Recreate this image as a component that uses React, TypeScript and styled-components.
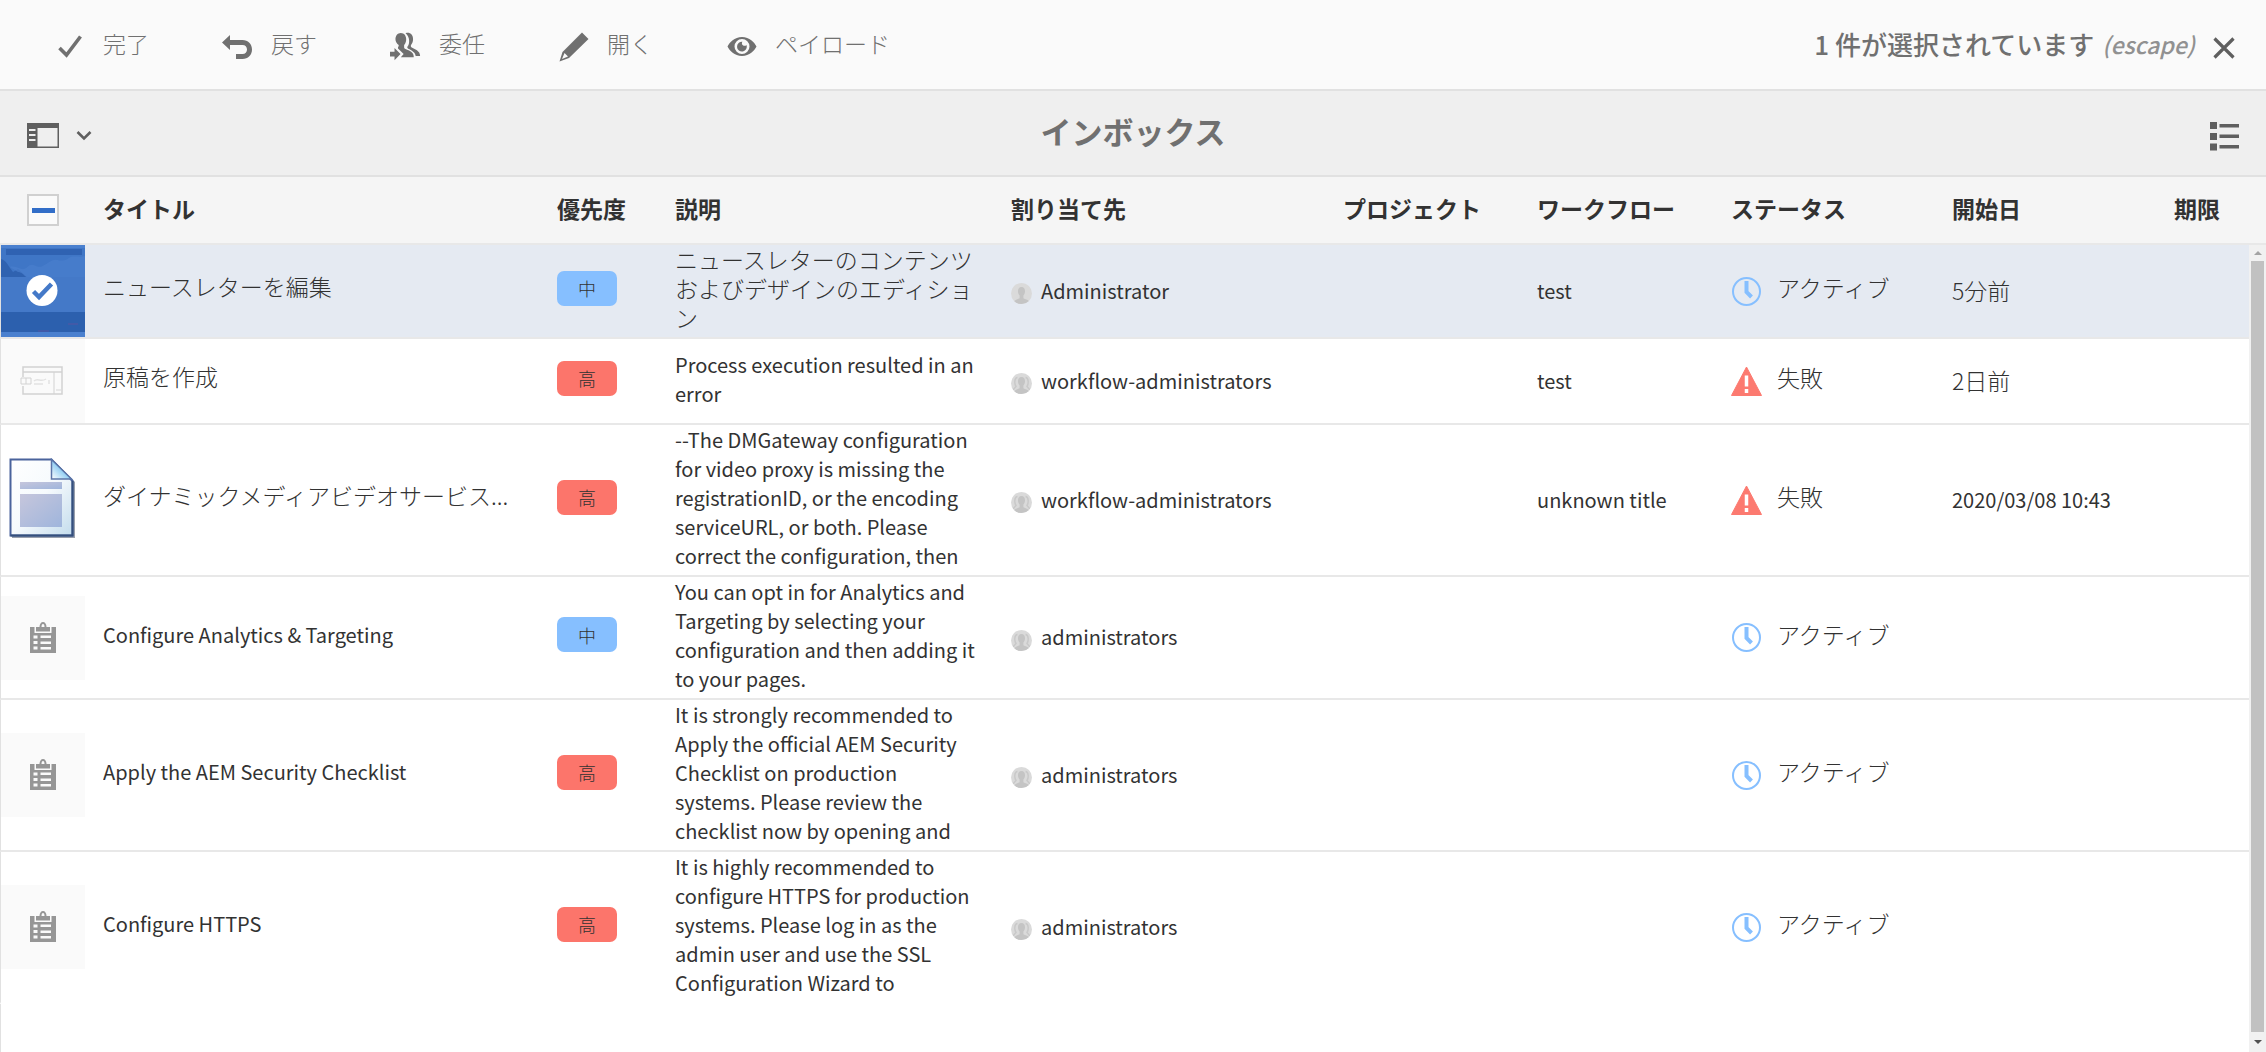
import React from "react";
import styled, { createGlobalStyle, css } from "styled-components";

const GlobalStyle = createGlobalStyle`
  *, *::before, *::after { box-sizing: border-box; }
  body {
    margin: 0;
    background: #fff;
    color: #323232;
    font-family: "Noto Sans CJK JP", "Noto Sans", sans-serif;
    font-size: 23px;
    font-weight: 300;
    line-height: 29px;
  }
  button { border: 0; padding: 0; background: none; color: inherit; font: inherit; cursor: pointer; }
  svg { display: block; flex: none; }
`;

const latinText = css`
  font-size: 20px;
  font-weight: 400;
`;

const Page = styled.div`
  display: flex;
  flex-direction: column;
  min-height: 100vh;
`;

const ActionBar = styled.header`
  display: flex;
  align-items: center;
  justify-content: space-between;
  height: 91px;
  padding: 0 29px 0 54px;
  background: #fafafa;
  border-bottom: 2px solid #e1e1e1;
  color: #707070;
`;

const Actions = styled.div`
  display: flex;
  gap: 73px;
`;

const Action = styled.button`
  display: flex;
  align-items: center;
  gap: 17px;
  padding-top: 4px;
`;

const ActionLabel = styled.span`
  padding-bottom: 6px;
`;

const Selection = styled.div`
  display: flex;
  align-items: center;
  gap: 8px;
  font-size: 26px;
  font-weight: 500;
`;

const Count = styled.span`
  padding-bottom: 2px;
`;

const Escape = styled.em`
  padding-right: 8px;
  color: #919191;
  font-size: 23px;
`;

const IconButton = styled.button`
  display: flex;
  align-items: center;
  gap: 16px;
  padding-top: 6px;
  color: #5f5f5f;
`;

const TitleBar = styled.div`
  display: grid;
  grid-template-columns: 1fr auto 1fr;
  align-items: center;
  height: 86px;
  padding: 0 26px;
  background: #efefef;
  border-bottom: 2px solid #e1e1e1;
`;

const PageTitle = styled.h1`
  margin: 0;
  padding-bottom: 4px;
  color: #707070;
  font-size: 31px;
  font-weight: 700;
  line-height: 40px;
`;

const End = styled.div`
  display: flex;
  justify-content: flex-end;
`;

const ListArea = styled.main`
  display: flex;
  flex: 1;
`;

const TableWrap = styled.div`
  display: flex;
  flex: 1;
  flex-direction: column;
  min-width: 0;
`;

const Filler = styled.div`
  flex: 1;
  border-left: 1px solid #e1e1e1;
`;

const Table = styled.table`
  width: 100%;
  table-layout: fixed;
  border-collapse: separate;
  border-spacing: 0;
`;

const Col = styled.col<{ $w?: number }>`
  ${(p) => p.$w && css`width: ${p.$w}px;`}
`;

const Th = styled.th`
  height: 68px;
  padding: 0 18px 4px;
  background: #f5f5f5;
  border-bottom: 2px solid #e8e8e8;
  font-weight: 700;
  text-align: left;
  white-space: nowrap;
`;

const ThCheck = styled(Th)`
  padding: 0 0 0 27px;
`;

const SelectAll = styled.input`
  appearance: none;
  display: block;
  width: 32px;
  height: 32px;
  margin: 0;
  border: 2px solid #d0d0d0;
  background: linear-gradient(#326ec8, #326ec8) center / 23px 5px no-repeat #fafafa;
`;

const Row = styled.tr<{ $selected?: boolean }>`
  background: ${(p) => (p.$selected ? "#e5eaf2" : "#fff")};
`;

const Td = styled.td<{ $raised?: boolean }>`
  padding: ${(p) => (p.$raised ? "0 18px 6px" : "0 18px")};
  border-bottom: 2px solid #e8e8e8;
  vertical-align: middle;
  ${Row}:last-child & { border-bottom-color: transparent; }
`;

const ThumbCell = styled(Td)`
  padding: 0;
  border-left: 1px solid #e1e1e1;
`;

const DescCell = styled(Td)`
  padding: 0 18px 5px;
`;

const Description = styled.div<{ $latin: boolean }>`
  ${(p) => p.$latin && latinText}
`;

const ItemTitle = styled.div<{ $latin: boolean }>`
  overflow: hidden;
  padding-bottom: 4px;
  line-height: 36px;
  text-overflow: ellipsis;
  white-space: nowrap;
  ${(p) => p.$latin && css`${latinText} padding-bottom: 0;`}
`;

const Value = styled.div<{ $latin: boolean }>`
  padding-bottom: 2px;
  white-space: nowrap;
  ${(p) => p.$latin && latinText}
`;

const Thumb = styled.div<{ $tinted?: boolean }>`
  display: flex;
  align-items: center;
  justify-content: center;
  height: 84px;
  background: ${(p) => (p.$tinted ? "#fafafa" : "transparent")};
`;

const Badge = styled.span<{ $high?: boolean }>`
  display: flex;
  align-items: center;
  justify-content: center;
  width: 60px;
  height: 35px;
  border-radius: 7px;
  background: ${(p) => (p.$high ? "#fc756b" : "#86bfff")};
  font-size: 18px;
  line-height: 24px;
`;

const Person = styled.div`
  display: flex;
  align-items: center;
  gap: 9px;
`;

const Avatar = styled.span`
  padding-top: 5px;
`;

const Status = styled.div`
  display: flex;
  align-items: center;
  gap: 15px;
`;

const StatusLabel = styled.span`
  padding-bottom: 7px;
`;

const RailColumn = styled.div`
  display: flex;
  flex-direction: column;
  width: 17px;
`;

const RailHead = styled.div`
  height: 68px;
  background: #f5f5f5;
  border-bottom: 2px solid #e8e8e8;
`;

const Rail = styled.div`
  display: flex;
  flex: 1;
  flex-direction: column;
  align-items: center;
  background: #f1f1f1;
`;

const RailArrow = styled.div<{ $down?: boolean }>`
  display: flex;
  align-items: center;
  height: ${(p) => (p.$down ? 20 : 16)}px;
  color: ${(p) => (p.$down ? "#505050" : "#a3a3a3")};
`;

const RailThumb = styled.div`
  flex: 1;
  width: 13px;
  background: #c1c1c1;
`;

const CheckIcon = () => (
  <svg width="32" height="32" viewBox="0 0 32 32" fill="none" stroke="currentColor" strokeWidth="3.600">
    <path d="M5.500 17 12.500 24 26.500 5.500" />
  </svg>
);

const RevertIcon = () => (
  <svg width="32" height="32" viewBox="0 0 32 32" fill="currentColor">
    <path d="M0 11.500 8 4v5h12.500C26 9 30 13 30 18.500S26 28 20.500 28H14v-5h6.500c2.800 0 4.500-1.900 4.500-4.500S23.300 14 20.500 14H8v5z" />
  </svg>
);

const DelegateIcon = () => (
  <svg width="32" height="32" viewBox="1 1 34 32" fill="currentColor">
    <path d="M12.500 2c3.600 0 5.700 3 5.700 6.800 0 2.600-.9 4.700-2.200 6.200v2.200c0 1 .5 1.500 1.500 2 4.500 1.900 8.700 3.600 8.700 7.800v1H12.500l3-3.500-6-6v-1.300c.6-.6.8-1.200.8-2.200-2-1.500-3.500-3.600-3.500-6.200C6.800 5 9 2 12.500 2z" />
    <path d="M17.500 2.300c4.700-1.500 8 1.700 8 6.500 0 2.300-.7 4.300-2 5.700-.5.600-.5 2.200.2 2.700 3.500 2.200 9.300 3.500 9.300 9.300h-4.700c-.5-3.800-4.200-6-8-7.700-1.200-.6-1.200-1.600-.5-2.500 2.300-2.900 2.500-10-2.300-14z" />
    <path d="M0 22h5.800v-4l6.400 6.500-6.400 6.500v-4H0z" />
  </svg>
);

const PencilIcon = () => (
  <svg width="32" height="32" viewBox="0 0 32 32" fill="currentColor">
    <path fillRule="evenodd" d="M24 1.500 30.500 8 11 27 1.500 30.500 4.500 21zM6.500 22 4 28 10 25.500z" />
  </svg>
);

const EyeIcon = () => (
  <svg width="32" height="32" viewBox="0 0 32 32" fill="currentColor">
    <path fillRule="evenodd" d="M16 6c7.500 0 12.500 5.500 14.500 9.500-2 4-7 9.500-14.500 9.500S3.500 19.500 1.500 15.500C3.500 11.500 8.500 6 16 6zM16 8a7.500 7.500 0 1 0 0 15 7.500 7.500 0 0 0 0-15z" />
    <path d="M16.500 10.800c-1.300 1.500-.3 4 2 4 .8 0 1.500-.3 2-.9A4.900 4.900 0 1 1 16.500 10.800z" />
  </svg>
);

const CloseIcon = () => (
  <svg width="26" height="26" viewBox="0 0 26 26" fill="none" stroke="currentColor" strokeWidth="3.200">
    <path d="M3.500 3.500 22.500 22.500M22.500 3.500 3.500 22.500" />
  </svg>
);

const PanelIcon = () => (
  <svg width="34" height="26" viewBox="0 0 34 26">
    <path fill="#5f5f5f" fillRule="evenodd" d="M1 0h32v25H1zM11.500 5v18.500H31.500V5z" />
    <path stroke="#efefef" strokeWidth="2" d="M3 7h6.500M3 12h6.500M3 17h6.500" />
  </svg>
);

const ChevronIcon = () => (
  <svg width="16" height="12" viewBox="0 0 16 12" fill="none" stroke="currentColor" strokeWidth="2.600">
    <path d="M1.500 2 8 8.500 14.500 2" />
  </svg>
);

const ListIcon = () => (
  <svg width="30" height="30" viewBox="0 0 30 30" fill="currentColor">
    <path d="M0 1h7v7H0zM0 12h7v7H0zM0 22.500h7v7H0zM9.500 3H29v3.500H9.500zM9.500 13.500H29V17H9.500zM9.500 24H29v3.500H9.500z" />
  </svg>
);

const NewsletterThumb = () => (
  <svg width="84" height="92" viewBox="0 0 84 92">
    <rect width="84" height="92" fill="#4a80cf" />
    <rect y="3" width="84" height="30" fill="#3f76c6" />
    <rect x="5" y="4" width="76" height="6" fill="#2f62b2" />
    <path d="M0 14c4 1 6 4 9 9l3 4 5-3 9 8h-26z" fill="#2f62b0" />
    <path d="M9 22c6-2 10 3 14 2s5-5 9-4 6 3 10 1 9-7 14-6 8 1 12-2 10 0 16-2v22H26c-4-4-6-6-9-6z" fill="#4a7fcd" opacity="0.700" />
    <rect y="32" width="84" height="35" fill="#4479c8" />
    <rect y="67" width="84" height="20" fill="#2c60ae" />
    <path d="M67 79h10M37 86h11" stroke="#4a58a6" strokeWidth="2" opacity="0.700" />
    <circle cx="41" cy="45.500" r="15.500" fill="#fff" />
    <path d="M32.500 46.500 38 52 50.500 39" fill="none" stroke="#4479c8" strokeWidth="4.500" />
  </svg>
);

const DraftThumb = () => (
  <svg width="84" height="84" viewBox="0 0 84 84" fill="none" stroke="#d2d2d2" strokeWidth="1.500">
    <path d="M22 38V28h39v27H22V47M22 33h39" />
    <path d="M20 39h10v6H20zM25 39v6M53 33v22" strokeWidth="1" />
    <path d="M33 42c4-4 6 2 12-2M33 45h9M48 41v4M55 51h5" stroke="#e2e2e2" />
  </svg>
);

const DocumentThumb = () => (
  <svg width="70" height="84" viewBox="1 1 70 84">
    <defs>
      <linearGradient id="sheet" x1="0" y1="0" x2="1" y2="1">
        <stop offset="0" stopColor="#fff" />
        <stop offset="0.5" stopColor="#f6fafd" />
        <stop offset="1" stopColor="#c3dcec" />
      </linearGradient>
      <linearGradient id="block" x1="0" y1="0" x2="1" y2="1">
        <stop offset="0" stopColor="#c6c6dc" />
        <stop offset="1" stopColor="#9fb5dc" />
      </linearGradient>
      <linearGradient id="fold" x1="0" y1="1" x2="1" y2="0">
        <stop offset="0" stopColor="#fff" />
        <stop offset="0.500" stopColor="#8fcdf2" />
        <stop offset="1" stopColor="#d9effb" />
      </linearGradient>
    </defs>
    <path d="M5 5h43l20 20v56H5z" fill="#6d7889" opacity="0.700" />
    <path d="M3.500 2.500h41L65.500 24v54.500h-62z" fill="url(#sheet)" stroke="#4a639c" strokeWidth="2" />
    <path d="M65.500 24v54.500h-62" fill="none" stroke="#35507c" strokeWidth="2" />
    <path d="M44.500 2.500V22h20z" fill="url(#fold)" stroke="#5b75a8" strokeWidth="1.500" />
    <rect x="13" y="25" width="42" height="7" fill="url(#block)" />
    <rect x="13" y="37" width="42" height="33" fill="url(#block)" />
  </svg>
);

const ClipboardIcon = () => (
  <svg width="26" height="32" viewBox="0 0 26 32" fill="#969696">
    <path fillRule="evenodd" d="M0 5h4.500v6h17V5H26v26H0zM3.500 13.500v3h4v-3zM10.500 13.500v2.500H21v-2.500zM3.500 19v3h4v-3zM10.500 19.500V22H21v-2.500zM3.500 24.500v3h4v-3zM10.500 25v2.500H21V25z" />
    <path fillRule="evenodd" d="M6 9.500V5h3.500C9.500 2 11 0 13 0s3.500 2 3.500 5H20v4.500zM11.500 5h3c0-2-.5-3-1.500-3s-1.500 1-1.500 3z" />
  </svg>
);

const UserIcon = ({ group }: { group?: boolean }) => (
  <svg width="21" height="21" viewBox="0 0 21 21">
    <clipPath id="avatar"><circle cx="10.500" cy="10.500" r="10.500" /></clipPath>
    <g clipPath="url(#avatar)">
      <rect width="21" height="21" fill="#dadada" />
      {group && <path d="M6.500 4.500c-3 0-3.500 6-1.500 9L2 17M14.500 4.500c3 0 3.500 6 1.500 9l3 3.500" fill="none" stroke="#c9c9c9" strokeWidth="1.500" />}
      <path d="M10.500 4c2.300 0 3.500 1.800 3.500 4.300 0 2-.8 3.400-1.600 4.300v2.600c1.800 1 4.600 1.200 5.600 3.300V21H3v-2.500c1-2.100 3.800-2.300 5.600-3.300v-2.600C7.800 11.700 7 10.300 7 8.300 7 5.800 8.200 4 10.500 4z" fill="#c4c4c4" />
    </g>
  </svg>
);

const ClockIcon = () => (
  <svg width="31" height="31" viewBox="0 0 31 31" fill="none" stroke="#86bfff">
    <circle cx="15.500" cy="15.500" r="13.500" strokeWidth="2" />
    <path d="M15.500 5v11l5 5" strokeWidth="4" />
  </svg>
);

const AlertIcon = () => (
  <svg width="31" height="31" viewBox="0 0 31 31">
    <path d="M15.500 1 30.500 29.500H.5z" fill="#fc7a70" stroke="#fc7a70" strokeLinejoin="round" />
    <path d="M15.500 9.500v11M15.500 23v4" stroke="#fff" strokeWidth="3.500" />
  </svg>
);

const ArrowIcon = ({ down }: { down?: boolean }) => (
  <svg width="8" height="4" viewBox="0 0 8 4" fill="currentColor">
    <path d={down ? "M0 0h8L4 4z" : "M0 4h8L4 0z"} />
  </svg>
);

type Item = {
  thumb: React.ReactNode;
  tinted?: boolean;
  title: string;
  high?: boolean;
  description: string;
  assignee: string;
  group?: boolean;
  workflow?: string;
  failed?: boolean;
  start?: string;
  selected?: boolean;
};

const items: Item[] = [
  { thumb: <NewsletterThumb />, title: "ニュースレターを編集", description: "ニュースレターのコンテンツおよびデザインのエディション", assignee: "Administrator", workflow: "test", start: "5分前", selected: true },
  { thumb: <DraftThumb />, tinted: true, title: "原稿を作成", high: true, description: "Process execution resulted in an error", assignee: "workflow-administrators", group: true, workflow: "test", failed: true, start: "2日前" },
  { thumb: <DocumentThumb />, title: "ダイナミックメディアビデオサービス...", high: true, description: "--The DMGateway configuration for video proxy is missing the registrationID, or the encoding serviceURL, or both. Please correct the configuration, then", assignee: "workflow-administrators", group: true, workflow: "unknown title", failed: true, start: "2020/03/08 10:43" },
  { thumb: <ClipboardIcon />, tinted: true, title: "Configure Analytics & Targeting", description: "You can opt in for Analytics and Targeting by selecting your configuration and then adding it to your pages.", assignee: "administrators", group: true },
  { thumb: <ClipboardIcon />, tinted: true, title: "Apply the AEM Security Checklist", high: true, description: "It is strongly recommended to Apply the official AEM Security Checklist on production systems. Please review the checklist now by opening and", assignee: "administrators", group: true },
  { thumb: <ClipboardIcon />, tinted: true, title: "Configure HTTPS", high: true, description: "It is highly recommended to configure HTTPS for production systems. Please log in as the admin user and use the SSL Configuration Wizard to", assignee: "administrators", group: true },
];

const actions = [
  { label: "完了", icon: <CheckIcon /> },
  { label: "戻す", icon: <RevertIcon /> },
  { label: "委任", icon: <DelegateIcon /> },
  { label: "開く", icon: <PencilIcon /> },
  { label: "ペイロード", icon: <EyeIcon /> },
];

const columns = ["タイトル", "優先度", "説明", "割り当て先", "プロジェクト", "ワークフロー", "ステータス", "開始日", "期限"];
const widths = [85, undefined, 118, 336, 332, 194, 194, 221, 222, 93];

const isLatin = (text = "") => /^[\x20-\x7e]*$/.test(text);

export default function App() {
  return (
    <Page>
      <GlobalStyle />
      <ActionBar>
        <Actions>
          {actions.map((a) => (
            <Action key={a.label} type="button">
              {a.icon}
              <ActionLabel>{a.label}</ActionLabel>
            </Action>
          ))}
        </Actions>
        <Selection>
          <Count>1 件が選択されています</Count>
          <Escape>(escape)</Escape>
          <IconButton type="button" aria-label="閉じる"><CloseIcon /></IconButton>
        </Selection>
      </ActionBar>
      <TitleBar>
        <IconButton type="button" aria-label="パネル"><PanelIcon /><ChevronIcon /></IconButton>
        <PageTitle>インボックス</PageTitle>
        <End>
          <IconButton type="button" aria-label="リスト表示"><ListIcon /></IconButton>
        </End>
      </TitleBar>
      <ListArea>
        <TableWrap>
          <Table>
            <colgroup>{widths.map((w, i) => <Col key={i} $w={w} />)}</colgroup>
            <thead>
              <tr>
                <ThCheck><SelectAll type="checkbox" aria-label="すべて選択" /></ThCheck>
                {columns.map((c) => <Th key={c} scope="col">{c}</Th>)}
              </tr>
            </thead>
            <tbody>
              {items.map((it) => (
                <Row key={it.title} $selected={it.selected}>
                  <ThumbCell>{it.selected ? it.thumb : <Thumb $tinted={it.tinted}>{it.thumb}</Thumb>}</ThumbCell>
                  <Td $raised><ItemTitle $latin={isLatin(it.title)}>{it.title}</ItemTitle></Td>
                  <Td $raised><Badge $high={it.high}>{it.high ? "高" : "中"}</Badge></Td>
                  <DescCell><Description $latin={isLatin(it.description)}>{it.description}</Description></DescCell>
                  <Td>
                    <Person>
                      <Avatar><UserIcon group={it.group} /></Avatar>
                      <Value $latin>{it.assignee}</Value>
                    </Person>
                  </Td>
                  <Td />
                  <Td><Value $latin>{it.workflow}</Value></Td>
                  <Td>
                    <Status>
                      {it.failed ? <AlertIcon /> : <ClockIcon />}
                      <StatusLabel>{it.failed ? "失敗" : "アクティブ"}</StatusLabel>
                    </Status>
                  </Td>
                  <Td><Value $latin={isLatin(it.start)}>{it.start}</Value></Td>
                  <Td />
                </Row>
              ))}
            </tbody>
          </Table>
          <Filler />
        </TableWrap>
        <RailColumn>
          <RailHead />
          <Rail>
            <RailArrow><ArrowIcon /></RailArrow>
            <RailThumb />
            <RailArrow $down><ArrowIcon down /></RailArrow>
          </Rail>
        </RailColumn>
      </ListArea>
    </Page>
  );
}
